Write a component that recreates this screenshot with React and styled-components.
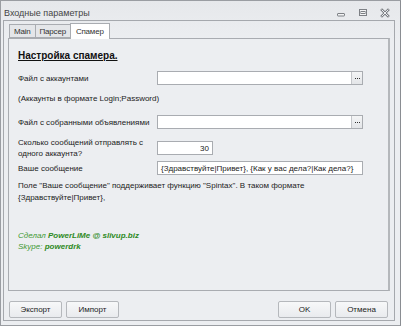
import React from "react";
import styled, { createGlobalStyle } from "styled-components";

const Global = createGlobalStyle`
  html, body { margin: 0; padding: 0; }
  body { width: 401px; height: 326px; overflow: hidden; font-family: "Liberation Sans", Arial, sans-serif; font-size: 8px; color: #222; }
`;

const Window = styled.div`
  box-sizing: border-box;
  width: 401px;
  height: 326px;
  border: 1px solid #9a9da2;
  border-right-color: #8a8d92;
  background: linear-gradient(#e6e8eb, #eceef1 40px, #eceef1);
  display: flex;
  flex-direction: column;
`;

const TitleBar = styled.div`
  height: 19px;
  display: flex;
  align-items: center;
  padding: 0 0 0 3px;
  color: #444;
  font-size: 9px;
`;

const Title = styled.div`
  flex: 1;
  padding-top: 4px;
`;

const Controls = styled.div`
  display: flex;
  gap: 10px;
  padding: 4px 9px 0 0;
  align-items: center;
`;

const Ctl = styled.svg`
  width: 12px;
  height: 12px;
  display: block;
`;

const Frame = styled.div`
  box-sizing: border-box;
  margin: 0 5px 0 2px;
  height: 301px;
  border: 1px solid #a5a8ad;
  padding: 2px 4px 0 4px;
  display: flex;
  flex-direction: column;
`;

const Tabs = styled.div`
  display: flex;
  align-items: flex-end;
  height: 15px;
  padding-left: 2px;
  position: relative;
  z-index: 1;
`;

const Tab = styled.div`
  box-sizing: border-box;
  height: ${(p) => (p.$active ? "16px" : "14px")};
  margin-bottom: ${(p) => (p.$active ? "-1px" : "0")};
  padding: 0 ${(p) => (p.$active ? "5px" : "4px")};
  border: 1px solid #a9acb1;
  border-bottom: ${(p) => (p.$active ? "none" : "1px solid #a9acb1")};
  margin-left: -1px;
  background: ${(p) => (p.$active ? "#fff" : "#e4e6e9")};
  display: flex;
  align-items: center;
  font-size: 8px;
  letter-spacing: -0.2px;
  color: #333;
`;

const Panel = styled.div`
  box-sizing: border-box;
  height: 253px;
  border: 1px solid #a9acb1;
  border-right: 2px solid #b4b7bb;
  background: #eceef1;
  padding: 11px 0 0 9px;
  display: flex;
  flex-direction: column;
`;

const Heading = styled.div`
  font-weight: bold;
  font-size: 10px;
  text-decoration: underline;
  color: #111;
  margin-bottom: 10px;
`;

const Row = styled.div`
  display: flex;
  align-items: center;
  min-height: 14px;
  margin-bottom: ${(p) => p.$mb || 0}px;
`;

const Label = styled.div`
  width: 139px;
  line-height: 11px;
  font-size: 8px;
  color: #222;
`;

const Input = styled.div`
  box-sizing: border-box;
  width: ${(p) => p.$w}px;
  height: 14px;
  border: 1px solid #a9acb1;
  background: #fff;
  display: flex;
  align-items: center;
  justify-content: ${(p) => (p.$right ? "flex-end" : "flex-start")};
  padding: 0 3px;
  font-size: 8px;
  color: #222;
  white-space: nowrap;
  overflow: hidden;
  position: relative;
`;

const Dots = styled.div`
  position: absolute;
  right: 0;
  top: 0;
  bottom: 0;
  width: 11px;
  border-left: 1px solid #c4c6ca;
  background: linear-gradient(#f4f5f6, #e3e5e8);
  display: flex;
  align-items: center;
  justify-content: center;
  gap: 1px;
  box-sizing: border-box;
`;

const Dot = styled.span`
  width: 1px;
  height: 1px;
  background: #333;
`;

const Text = styled.div`
  font-size: 8px;
  line-height: 12px;
  color: #222;
  margin-bottom: ${(p) => p.$mb || 0}px;
`;

const Credit = styled.div`
  font-style: italic;
  font-size: 8px;
  line-height: 11px;
  color: #3f9a34;
  b { font-weight: bold; color: #2e8a24; }
`;

const Footer = styled.div`
  display: flex;
  gap: 4px;
  padding: 10px 2px 0 1px;
`;

const Spacer = styled.div`
  flex: 1;
`;

const Button = styled.div`
  box-sizing: border-box;
  width: 53px;
  height: 17px;
  border: 1px solid #b5b8bc;
  border-radius: 2px;
  background: linear-gradient(#f7f8f9, #e9ebee);
  display: flex;
  align-items: center;
  justify-content: center;
  font-size: 8px;
  color: #222;
`;

const DotsBtn = () => (
  <Dots>
    <Dot />
    <Dot />
    <Dot />
  </Dots>
);

export default function App() {
  return (
    <>
      <Global />
      <Window>
        <TitleBar>
          <Title>Входные параметры</Title>
          <Controls>
            <Ctl viewBox="0 0 12 12">
              <rect x="2.5" y="6.5" width="7" height="2.5" rx="0.5" fill="#f3f4f5" stroke="#7d8085" />
            </Ctl>
            <Ctl viewBox="0 0 12 12">
              <rect x="2.5" y="2.5" width="7" height="6" fill="#f3f4f5" stroke="#7d8085" />
              <rect x="4" y="4.5" width="4" height="2" fill="none" stroke="#7d8085" />
            </Ctl>
            <Ctl viewBox="0 0 12 12">
              <path d="M3 3 L9 9 M9 3 L3 9" stroke="#7d8085" strokeWidth="2.6" strokeLinecap="square" />
              <path d="M3 3 L9 9 M9 3 L3 9" stroke="#eef0f2" strokeWidth="1" strokeLinecap="square" />
            </Ctl>
          </Controls>
        </TitleBar>
        <Frame>
          <Tabs>
            <Tab>Main</Tab>
            <Tab>Парсер</Tab>
            <Tab $active>Спамер</Tab>
          </Tabs>
          <Panel>
            <Heading>Настройка спамера.</Heading>
            <Row $mb={8}>
              <Label>Файл с аккаунтами</Label>
              <Input $w={206}><DotsBtn /></Input>
            </Row>
            <Text $mb={10}>(Аккаунты в формате Login;Password)</Text>
            <Row $mb={8}>
              <Label>Файл с собранными объявлениями</Label>
              <Input $w={206}><DotsBtn /></Input>
            </Row>
            <Row $mb={2}>
              <Label>Сколько сообщений отправлять с одного аккаунта?</Label>
              <Input $w={56} $right>30</Input>
            </Row>
            <Row $mb={5}>
              <Label>Ваше сообщение</Label>
              <Input $w={206}>{"{Здравствуйте|Привет}, {Как у вас дела?|Как дела?}"}</Input>
            </Row>
            <Text $mb={26}>
              Поле "Ваше сообщение" поддерживает функцию "Spintax". В таком формате
              <br />
              {"{Здравствуйте|Привет},"}
            </Text>
            <Credit>
              Сделал <b>PowerLiMe @ slivup.biz</b>
              <br />
              Skype: <b>powerdrk</b>
            </Credit>
          </Panel>
          <Footer>
            <Button>Экспорт</Button>
            <Button>Импорт</Button>
            <Spacer />
            <Button>OK</Button>
            <Button>Отмена</Button>
          </Footer>
        </Frame>
      </Window>
    </>
  );
}
